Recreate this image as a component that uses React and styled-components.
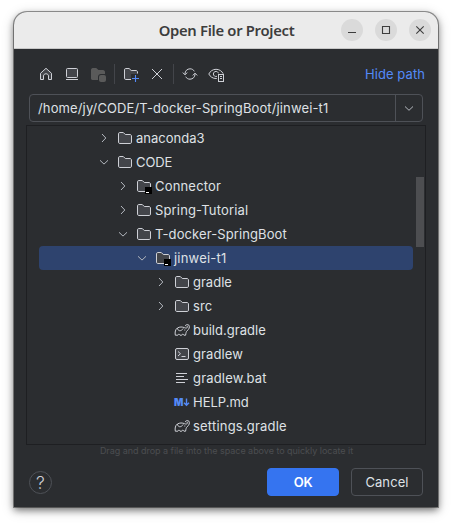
import React from "react";
import styled, { createGlobalStyle } from "styled-components";

const GlobalStyle = createGlobalStyle`
  * { box-sizing: border-box; }
  body { margin: 0; background: #fff; overflow: hidden; }
  svg { display: block; flex: none; }
  button { font: inherit; padding: 0; border: 0; background: none; }
`;

const Desktop = styled.main`
  height: 524px;
  padding: 12px 14px 17px;
  font: 13px/16px Inter, sans-serif;
  letter-spacing: 0.1px;
  color: #dfe1e5;
`;

const Window = styled.section`
  height: 495px;
  display: flex;
  flex-direction: column;
  background: #2b2d30;
  border-radius: 13px 13px 0 0;
  overflow: hidden;
  box-shadow: 0 0 0 1px rgba(0, 0, 0, 0.38), 0 3px 7px rgba(0, 0, 0, 0.48), 0 3px 14px rgba(0, 0, 0, 0.2);
`;

const TitleBar = styled.header`
  height: 37px;
  flex: none;
  display: grid;
  grid-template-columns: 94px 1fr 94px;
  align-items: center;
  background: #ebebeb;
  border-bottom: 1px solid #c8c8c8;
`;

const Title = styled.h1`
  grid-column: 2;
  margin: 0;
  padding-left: 1px;
  text-align: center;
  white-space: nowrap;
  font: 600 14.8px/20px "Noto Sans", sans-serif;
  letter-spacing: -0.3px;
  color: #3d3d3d;
`;

const WindowControls = styled.div`
  display: flex;
  gap: 12px;
  margin-left: -3px;
`;

const WindowButton = styled.button`
  width: 22px;
  height: 22px;
  border-radius: 50%;
  background: #dadada;
`;

const Toolbar = styled.div`
  height: 45px;
  flex: none;
  display: flex;
  align-items: center;
  padding: 5px 13px 0 24px;
`;

const ToolButton = styled.button`
  width: 16px;
  height: 16px;
  margin-right: ${(p) => p.$after}px;
`;

const ToolSeparator = styled.i`
  width: 1px;
  height: 20px;
  margin-right: ${(p) => p.$after}px;
  background: #43454a;
`;

const HidePath = styled.a`
  margin-left: auto;
  color: #548af7;
  letter-spacing: 0.08px;
`;

const PathField = styled.div`
  height: 28px;
  flex: none;
  display: flex;
  margin: 0 15px 0 15px;
  border: 1px solid #4e5157;
  border-radius: 4px;
`;

const PathText = styled.div`
  flex: 1;
  padding: 5px 0 0 8px;
  white-space: nowrap;
  letter-spacing: 0.13px;
`;

const PathDropdown = styled.button`
  width: 27px;
  padding-left: 5px;
  border-left: 1px solid #4e5157;
`;

const TreePanel = styled.div`
  height: 320px;
  flex: none;
  display: flex;
  margin: 3px 12px 0;
  border: 1px solid #1e1f22;
`;

const TreeList = styled.ul`
  flex: 1;
  margin: 0;
  padding: 0 3px 0 12px;
  list-style: none;
`;

const TreeRow = styled.li`
  height: 24px;
  display: flex;
  align-items: center;
  padding-left: ${(p) => 57 + p.$depth * 19}px;
  border-radius: 4px;
  background: ${(p) => (p.$selected ? "#2e436e" : "transparent")};
`;

const ExpanderSlot = styled.span`
  width: 16px;
  height: 16px;
  margin-right: 5px;
`;

const RowName = styled.span`
  margin-left: 3px;
  white-space: nowrap;
  letter-spacing: ${(p) => p.$tracking ?? 0.1}px;
`;

const ScrollTrack = styled.div`
  width: 9px;
  padding-top: 51px;
`;

const ScrollThumb = styled.div`
  width: 8px;
  height: 70px;
  background: #4d4e51;
`;

const Hint = styled.p`
  height: 12px;
  margin: 0;
  padding-left: 1px;
  text-align: center;
  font-size: 9px;
  line-height: 12px;
  letter-spacing: -0.03px;
  color: #4c4e51;
  white-space: nowrap;
`;

const Footer = styled.footer`
  display: flex;
  align-items: center;
  gap: 12px;
  padding: 11px 15px 0;
`;

const HelpButton = styled.button`
  width: 23px;
  height: 23px;
  margin-right: auto;
  border: 1px solid #4e5157;
  border-radius: 50%;
  font-size: 17.5px;
  font-weight: 300;
  line-height: 21px;
  color: #ced0d6;
`;

const DialogButton = styled.button`
  width: 72px;
  height: 28px;
  border-radius: 4px;
  border: 1px solid ${(p) => (p.$primary ? "#3574f0" : "#4e5157")};
  background: ${(p) => (p.$primary ? "#3574f0" : "transparent")};
  color: ${(p) => (p.$primary ? "#fff" : "#dfe1e5")};
  font-weight: ${(p) => (p.$primary ? 600 : 400)};
  letter-spacing: ${(p) => (p.$primary ? -0.3 : 0.1)}px;
`;

const Svg = ({ children, size = 16 }) => (
  <svg width={size} height={size} viewBox={`0 0 ${size} ${size}`} fill="none" stroke="#ced0d6">
    {children}
  </svg>
);

const FOLDER =
  "M8.1 4.35L8.25 4.5H13C13.83 4.5 14.5 5.17 14.5 6V12.13C14.5 12.95 13.93 13.5 13.37 13.5H2.63C2.07 13.5 1.5 12.95 1.5 12.13V3.87C1.5 3.05 2.07 2.5 2.63 2.5H6.12C6.26 2.5 6.39 2.56 6.48 2.65Z";

const FolderIcon = () => (
  <Svg>
    <path d={FOLDER} fill="#43454a" />
  </Svg>
);

const ModuleIcon = () => (
  <Svg>
    <path d={FOLDER} fill="#43454a" />
    <path d="M9 9H16V16H9Z" fill="#000" stroke="none" />
    <path d="M10 14.5H13" stroke="#fff" />
  </Svg>
);

const GradleIcon = () => (
  <Svg>
    <path
      d="M11.3 4.1C11.2 2.9 13.6 1.9 14.9 3.2C16.1 4.9 15 7.4 13.1 8.8C12.2 9.6 11.9 11 11.6 13.2H9.9C9.4 11.8 8.3 11.8 7.8 13.2H6C5.5 11.8 4.4 11.8 3.9 13.2H1.3C.8 10.2 1.3 7.4 3.4 6C5.6 4.7 8.4 4.7 10.6 5.7C11.6 6.2 12.6 6.2 13.4 5.4C14.1 4.8 13.6 3.8 12.7 4.3M3.4 6.2C4 9 6.4 9.6 8.4 7.4L9.4 6.5M10.3 8H11.3"
      strokeLinejoin="round"
    />
  </Svg>
);

const ShellIcon = () => (
  <Svg>
    <rect x="1.5" y="2.5" width="13" height="11" rx="1.5" fill="#43454a" />
    <path d="M4 5.5L6.5 7.7L4 10M7.5 10.5H11.5" />
  </Svg>
);

const TextIcon = () => (
  <Svg>
    <path d="M2 3.5H13M2 6.5H10M2 9.5H14M2 12.5H11" />
  </Svg>
);

const MarkdownMark = styled.span`
  width: 16px;
  height: 16px;
  display: flex;
  color: #548af7;
  letter-spacing: 0;
  font: 900 9.8px/17px Inter, sans-serif;
`;

const MarkdownIcon = () => (
  <MarkdownMark>
    M
    <svg width="7" height="16" viewBox="0 0 7 16" fill="none" stroke="#548af7" strokeWidth="1.4">
      <path d="M3.5 4.5V11M1 8.7L3.5 11.2L6 8.7" />
    </svg>
  </MarkdownMark>
);

const Chevron = ({ open }) => (
  <Svg>
    <path d={open ? "M4 6.3L8 10.1L12 6.3" : "M6 4L9.8 8L6 12"} stroke="#b4b8bf" />
  </Svg>
);

const ICONS = {
  folder: FolderIcon,
  module: ModuleIcon,
  gradle: GradleIcon,
  shell: ShellIcon,
  text: TextIcon,
  markdown: MarkdownIcon,
};

const ROWS = [
  { name: "anaconda3", depth: 0, icon: "folder", open: false, tracking: 0 },
  { name: "CODE", depth: 0, icon: "folder", open: true, tracking: -0.1 },
  { name: "Connector", depth: 1, icon: "module", open: false, tracking: 0.18 },
  { name: "Spring-Tutorial", depth: 1, icon: "folder", open: false, tracking: 0.15 },
  { name: "T-docker-SpringBoot", depth: 1, icon: "folder", open: true },
  { name: "jinwei-t1", depth: 2, icon: "module", open: true, selected: true, tracking: 0.2 },
  { name: "gradle", depth: 3, icon: "folder", open: false, tracking: 0 },
  { name: "src", depth: 3, icon: "folder", open: false },
  { name: "build.gradle", depth: 3, icon: "gradle", tracking: 0.02 },
  { name: "gradlew", depth: 3, icon: "shell" },
  { name: "gradlew.bat", depth: 3, icon: "text", tracking: 0.18 },
  { name: "HELP.md", depth: 3, icon: "markdown", tracking: 0 },
  { name: "settings.gradle", depth: 3, icon: "gradle", tracking: 0.2 },
];

function Tree() {
  return (
    <TreePanel>
      <TreeList>
        {ROWS.map((row) => {
          const Icon = ICONS[row.icon];
          return (
            <TreeRow key={row.name} $depth={row.depth} $selected={row.selected}>
              <ExpanderSlot>{row.open !== undefined && <Chevron open={row.open} />}</ExpanderSlot>
              <Icon />
              <RowName $tracking={row.tracking}>{row.name}</RowName>
            </TreeRow>
          );
        })}
      </TreeList>
      <ScrollTrack>
        <ScrollThumb />
      </ScrollTrack>
    </TreePanel>
  );
}

function Tools() {
  return (
    <Toolbar>
      <ToolButton $after={10} aria-label="Home">
        <Svg>
          <path d="M2.5 7.3L8 2.3L13.5 7.3V13.5H10.5V10C10.5 8.6 9.4 7.8 8 7.8S5.5 8.6 5.5 10V13.5H2.5Z" fill="#43454a" />
        </Svg>
      </ToolButton>
      <ToolButton $after={10} aria-label="Desktop">
        <Svg>
          <rect x="2.5" y="2.5" width="11" height="9" rx="1" fill="#43454a" />
          <path d="M2 13.5H14" />
        </Svg>
      </ToolButton>
      <ToolButton $after={8} aria-label="Project folder">
        <Svg>
          <path d="M1 4C1 3 1.7 2 2.7 2H6.2L8.5 4H13C14.2 4 15 5 15 6V8H11C9.3 8 8 9.3 8 11V14H2.5C1.6 14 1 13.2 1 12.3Z" fill="#5a5a5a" stroke="none" />
          <rect x="9" y="9" width="7" height="7" rx="2" fill="#5a5a5a" stroke="none" />
        </Svg>
      </ToolButton>
      <ToolSeparator $after={8} />
      <ToolButton $after={10} aria-label="New folder">
        <Svg>
          <path d={FOLDER} fill="#43454a" stroke="none" />
          <path d="M8 13.5H2.6C2 13.5 1.5 13 1.5 12.1V3.9C1.5 3 2 2.5 2.6 2.5H6.1L8.2 4.5H13C13.9 4.5 14.5 5.2 14.5 6V7.5" />
          <path d="M8 8H16V16H8Z" fill="#2b2d30" stroke="none" />
          <path d="M12.5 9V16M9 12.5H16" stroke="#548af7" strokeWidth="1.1" />
        </Svg>
      </ToolButton>
      <ToolButton $after={8} aria-label="Delete">
        <Svg>
          <path d="M3 3L13 13M13 3L3 13" />
        </Svg>
      </ToolButton>
      <ToolSeparator $after={8} />
      <ToolButton $after={10} aria-label="Refresh">
        <Svg>
          <path d="M3 8.7V7.8C3 5 5.2 2.8 8 2.8C10 2.8 11.5 3.8 12.3 5.3M.8 6.6L3 8.8L5.2 6.6M13 7.3V8.2C13 11 10.8 13.2 8 13.2C6 13.2 4.5 12.2 3.7 10.7M10.8 9.4L13 7.2L15.2 9.4" />
        </Svg>
      </ToolButton>
      <ToolButton $after={0} aria-label="Show hidden files">
        <Svg>
          <path d="M8.8 12.5H8C4.8 12.5 2.2 10.8.8 8C2.2 5.2 4.8 3.3 8 3.3S13.8 5 15.2 7.7" />
          <path d="M9 10.3C7.2 11 5.4 9.8 5.4 8C5.4 6.5 6.5 5.4 8 5.4C9.2 5.4 10.2 6.2 10.5 7.3" />
          <rect x="10.5" y="8.5" width="5" height="7" />
          <path d="M12 10.5H14M12 12.5H14" />
        </Svg>
      </ToolButton>
      <HidePath>Hide path</HidePath>
    </Toolbar>
  );
}

const CONTROLS = [
  { label: "Minimize", d: "M7 13.5H15" },
  { label: "Maximize", d: "M7.5 7.5H14.5V14.5H7.5Z" },
  { label: "Close", d: "M7.3 7.3L14.7 14.7M14.7 7.3L7.3 14.7" },
];

export default function App() {
  return (
    <Desktop>
      <GlobalStyle />
      <Window>
        <TitleBar>
          <Title>Open File or Project</Title>
          <WindowControls>
            {CONTROLS.map((c) => (
              <WindowButton key={c.label} aria-label={c.label}>
                <svg width="22" height="22" viewBox="0 0 22 22" fill="none" stroke="#3d3d3d" strokeWidth="1.1">
                  <path d={c.d} />
                </svg>
              </WindowButton>
            ))}
          </WindowControls>
        </TitleBar>
        <Tools />
        <PathField>
          <PathText>/home/jy/CODE/T-docker-SpringBoot/jinwei-t1</PathText>
          <PathDropdown aria-label="Path history">
            <Svg>
              <path d="M4 6.5L8 10.3L12 6.5" stroke="#b4b8bf" />
            </Svg>
          </PathDropdown>
        </PathField>
        <Tree />
        <Hint>Drag and drop a file into the space above to quickly locate it</Hint>
        <Footer>
          <HelpButton>?</HelpButton>
          <DialogButton $primary>OK</DialogButton>
          <DialogButton>Cancel</DialogButton>
        </Footer>
      </Window>
    </Desktop>
  );
}
